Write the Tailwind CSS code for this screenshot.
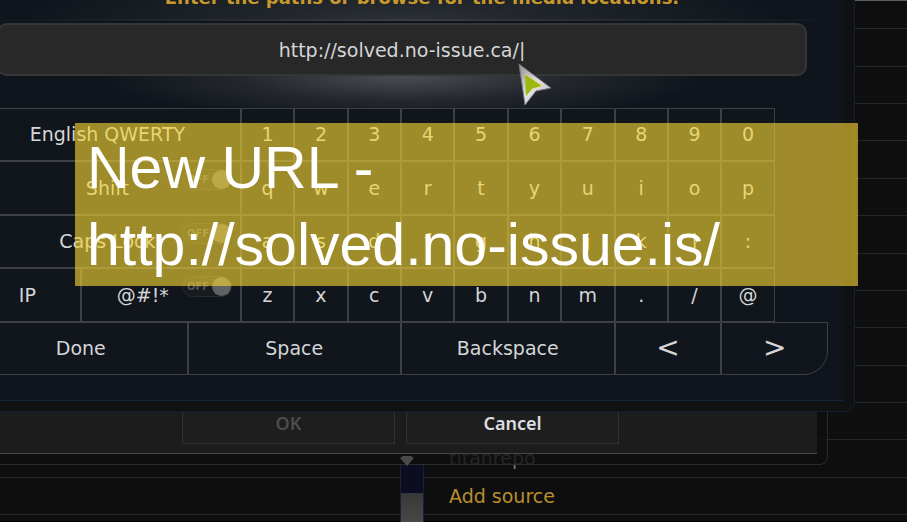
<!DOCTYPE html>
<html lang="en">
<head>
  <meta charset="UTF-8">
  <title>Add file source</title>
  <script src="https://cdn.jsdelivr.net/npm/@tailwindcss/browser@4"></script>
</head>
<body class="relative h-screen overflow-hidden bg-[#0e0e0f] font-['DejaVu_Sans',sans-serif] text-[19px] text-[#d4d6d8]">

  <!-- File manager list -->
  <ul class="absolute inset-x-0 -top-2 bottom-[7px] grid grid-rows-14 [&>li]:flex [&>li]:items-center [&>li]:border-b [&>li]:border-[#262728] [&>li]:pl-[449px]">
    <li></li>
    <li></li>
    <li></li>
    <li></li>
    <li></li>
    <li></li>
    <li></li>
    <li></li>
    <li></li>
    <li></li>
    <li></li>
    <li></li>
    <li class="text-[#777]">titanrepo</li>
    <li class="text-[#b88f2c]">Add source</li>
  </ul>
  <div class="absolute top-0 right-0 h-px w-[87px] bg-[#5a5e60]"></div>
  <div class="absolute inset-x-0 bottom-0 h-px bg-black"></div>

  <!-- Scrollbar -->
  <div class="absolute top-[465px] bottom-0 left-[400px] w-6 border-x border-[#13233c] bg-[#0d0d22] pt-7">
    <div class="h-full bg-linear-to-b from-[#383838] to-[#484848]"></div>
  </div>

  <!-- Source dialog -->
  <div class="absolute top-[380px] right-[79px] -left-[27px] rounded-b-lg border border-[#2b2c2c] bg-[#0f0f0f]/80 px-[10px] pb-[10px]">
    <div class="flex justify-center gap-[11px] border-b border-[#444545] bg-[#1c1c1c] pt-[21px] pb-[9px] font-['Noto_Sans',sans-serif] text-lg font-semibold">
      <button class="h-[42px] w-[213px] border border-[#303131] bg-[#1e1e1e] text-[#4c4d4e]" disabled>OK</button>
      <button class="h-[42px] w-[213px] border border-[#303131] bg-[#1e1e1e] text-[#dcdee2]">Cancel</button>
    </div>
  </div>
  <svg class="absolute top-[456px] left-[400px] h-[10px] w-[14px]" viewBox="0 0 14 10">
    <path d="M0 2 L3 0 H11 L14 2 L7 10 Z" fill="#4a4a4a"/>
  </svg>

  <!-- Keyboard window -->
  <div class="absolute -top-4 right-[52px] -left-[27px] rounded-b-lg border border-[#12202f] bg-[#101112] pr-[11px] pb-[10px]">
    <div class="border-b border-[#13243a] bg-[#10141c] pb-[25px]">
      <h1 class="h-[34px] bg-[radial-gradient(ellipse_380px_50px_at_428px_100%,#2b3035,#10141c)] pl-[27px] text-center text-lg leading-[26px] font-bold text-[#c8982a]">Enter the paths or browse for the media locations.</h1>
      <div class="h-[2px] bg-linear-to-r from-[#10141c] via-[#3a3e43] to-[#10141c]"></div>
      <div class="mt-[2px] mr-[36px] ml-[23px]">
        <input type="text" aria-label="Path" value="http://solved.no-issue.ca/|" class="block h-[53px] w-full rounded-[10px] border-2 border-[#343737] bg-[#282828] text-center">
      </div>
      <div class="h-[32px] bg-[radial-gradient(ellipse_300px_46px_at_428px_0,#4a4e53,#23272d_55%,#10141c)]"></div>

      <div class="mr-[15px] grid min-h-[267px] auto-rows-fr grid-cols-16 [&>button]:relative [&>button]:border [&>button]:border-[#3e4144] [&>button]:bg-[#11151c]">
        <button class="col-span-5">English QWERTY</button>
        <button>1</button>
        <button>2</button>
        <button>3</button>
        <button>4</button>
        <button>5</button>
        <button>6</button>
        <button>7</button>
        <button>8</button>
        <button>9</button>
        <button>0</button>

        <button class="col-span-5 col-start-1">Shift
          <span class="absolute top-[7px] right-2 flex h-[21px] w-[50px] items-center justify-between rounded-full border border-[#292d31] bg-[#171b1f] pl-1 text-[10px] font-bold text-[#54575a]">OFF<span class="size-[19px] rounded-full bg-[#5f6163]"></span></span>
        </button>
        <button>q</button>
        <button>w</button>
        <button>e</button>
        <button>r</button>
        <button>t</button>
        <button>y</button>
        <button>u</button>
        <button>i</button>
        <button>o</button>
        <button>p</button>

        <button class="col-span-5 col-start-1">Caps Lock
          <span class="absolute top-[7px] right-2 flex h-[21px] w-[50px] items-center justify-between rounded-full border border-[#292d31] bg-[#171b1f] pl-1 text-[10px] font-bold text-[#54575a]">OFF<span class="size-[19px] rounded-full bg-[#5f6163]"></span></span>
        </button>
        <button>a</button>
        <button>s</button>
        <button>d</button>
        <button>f</button>
        <button>g</button>
        <button>h</button>
        <button>j</button>
        <button>k</button>
        <button>l</button>
        <button>:</button>

        <button class="col-span-2 col-start-1">IP</button>
        <button class="col-span-3 pr-9">@#!*
          <span class="absolute top-[7px] right-2 flex h-[21px] w-[50px] items-center justify-between rounded-full border border-[#292d31] bg-[#171b1f] pl-1 text-[10px] font-bold text-[#54575a]">OFF<span class="size-[19px] rounded-full bg-[#5f6163]"></span></span>
        </button>
        <button>z</button>
        <button>x</button>
        <button>c</button>
        <button>v</button>
        <button>b</button>
        <button>n</button>
        <button>m</button>
        <button>.</button>
        <button>/</button>
        <button>@</button>

        <button class="col-span-4 col-start-1">Done</button>
        <button class="col-span-4">Space</button>
        <button class="col-span-4">Backspace</button>
        <button class="col-span-2 text-[28px] leading-none" aria-label="Move cursor left">&lt;</button>
        <button class="col-span-2 rounded-br-[24px] text-[28px] leading-none" aria-label="Move cursor right">&gt;</button>
      </div>
    </div>
  </div>

  <!-- Mouse pointer -->
  <svg class="absolute top-[62px] left-[516px] h-[46px] w-[38px]" viewBox="0 0 38 46">
    <defs>
      <linearGradient id="pointer" x1="0" y1="0" x2="1" y2="1">
        <stop offset="0" stop-color="#8e8e92"/>
        <stop offset="0.5" stop-color="#e4e2e4"/>
        <stop offset="1" stop-color="#b4b2b8"/>
      </linearGradient>
    </defs>
    <path d="M3 2 L35 26 L20 29 L9 43 Z" fill="url(#pointer)" stroke="#77777b" stroke-width="1" stroke-linejoin="round"/>
    <path d="M9 12 L26 24 L16 27 L10 34 Z" fill="#9cb910"/>
    <path d="M9 12 L27 24 L16 27" fill="none" stroke="#e9d79a" stroke-width="1"/>
  </svg>

  <!-- Caption -->
  <div class="absolute top-[123px] right-[49px] left-[75px] bg-[rgb(245,212,51)]/62 pt-[7px] pb-[2px] pl-[12px] font-['Liberation_Sans',Arial,sans-serif] text-[59px] leading-[77px] whitespace-nowrap text-white">
    <p>New URL -</p>
    <p>http://solved.no-issue.is/</p>
  </div>
</body>
</html>
